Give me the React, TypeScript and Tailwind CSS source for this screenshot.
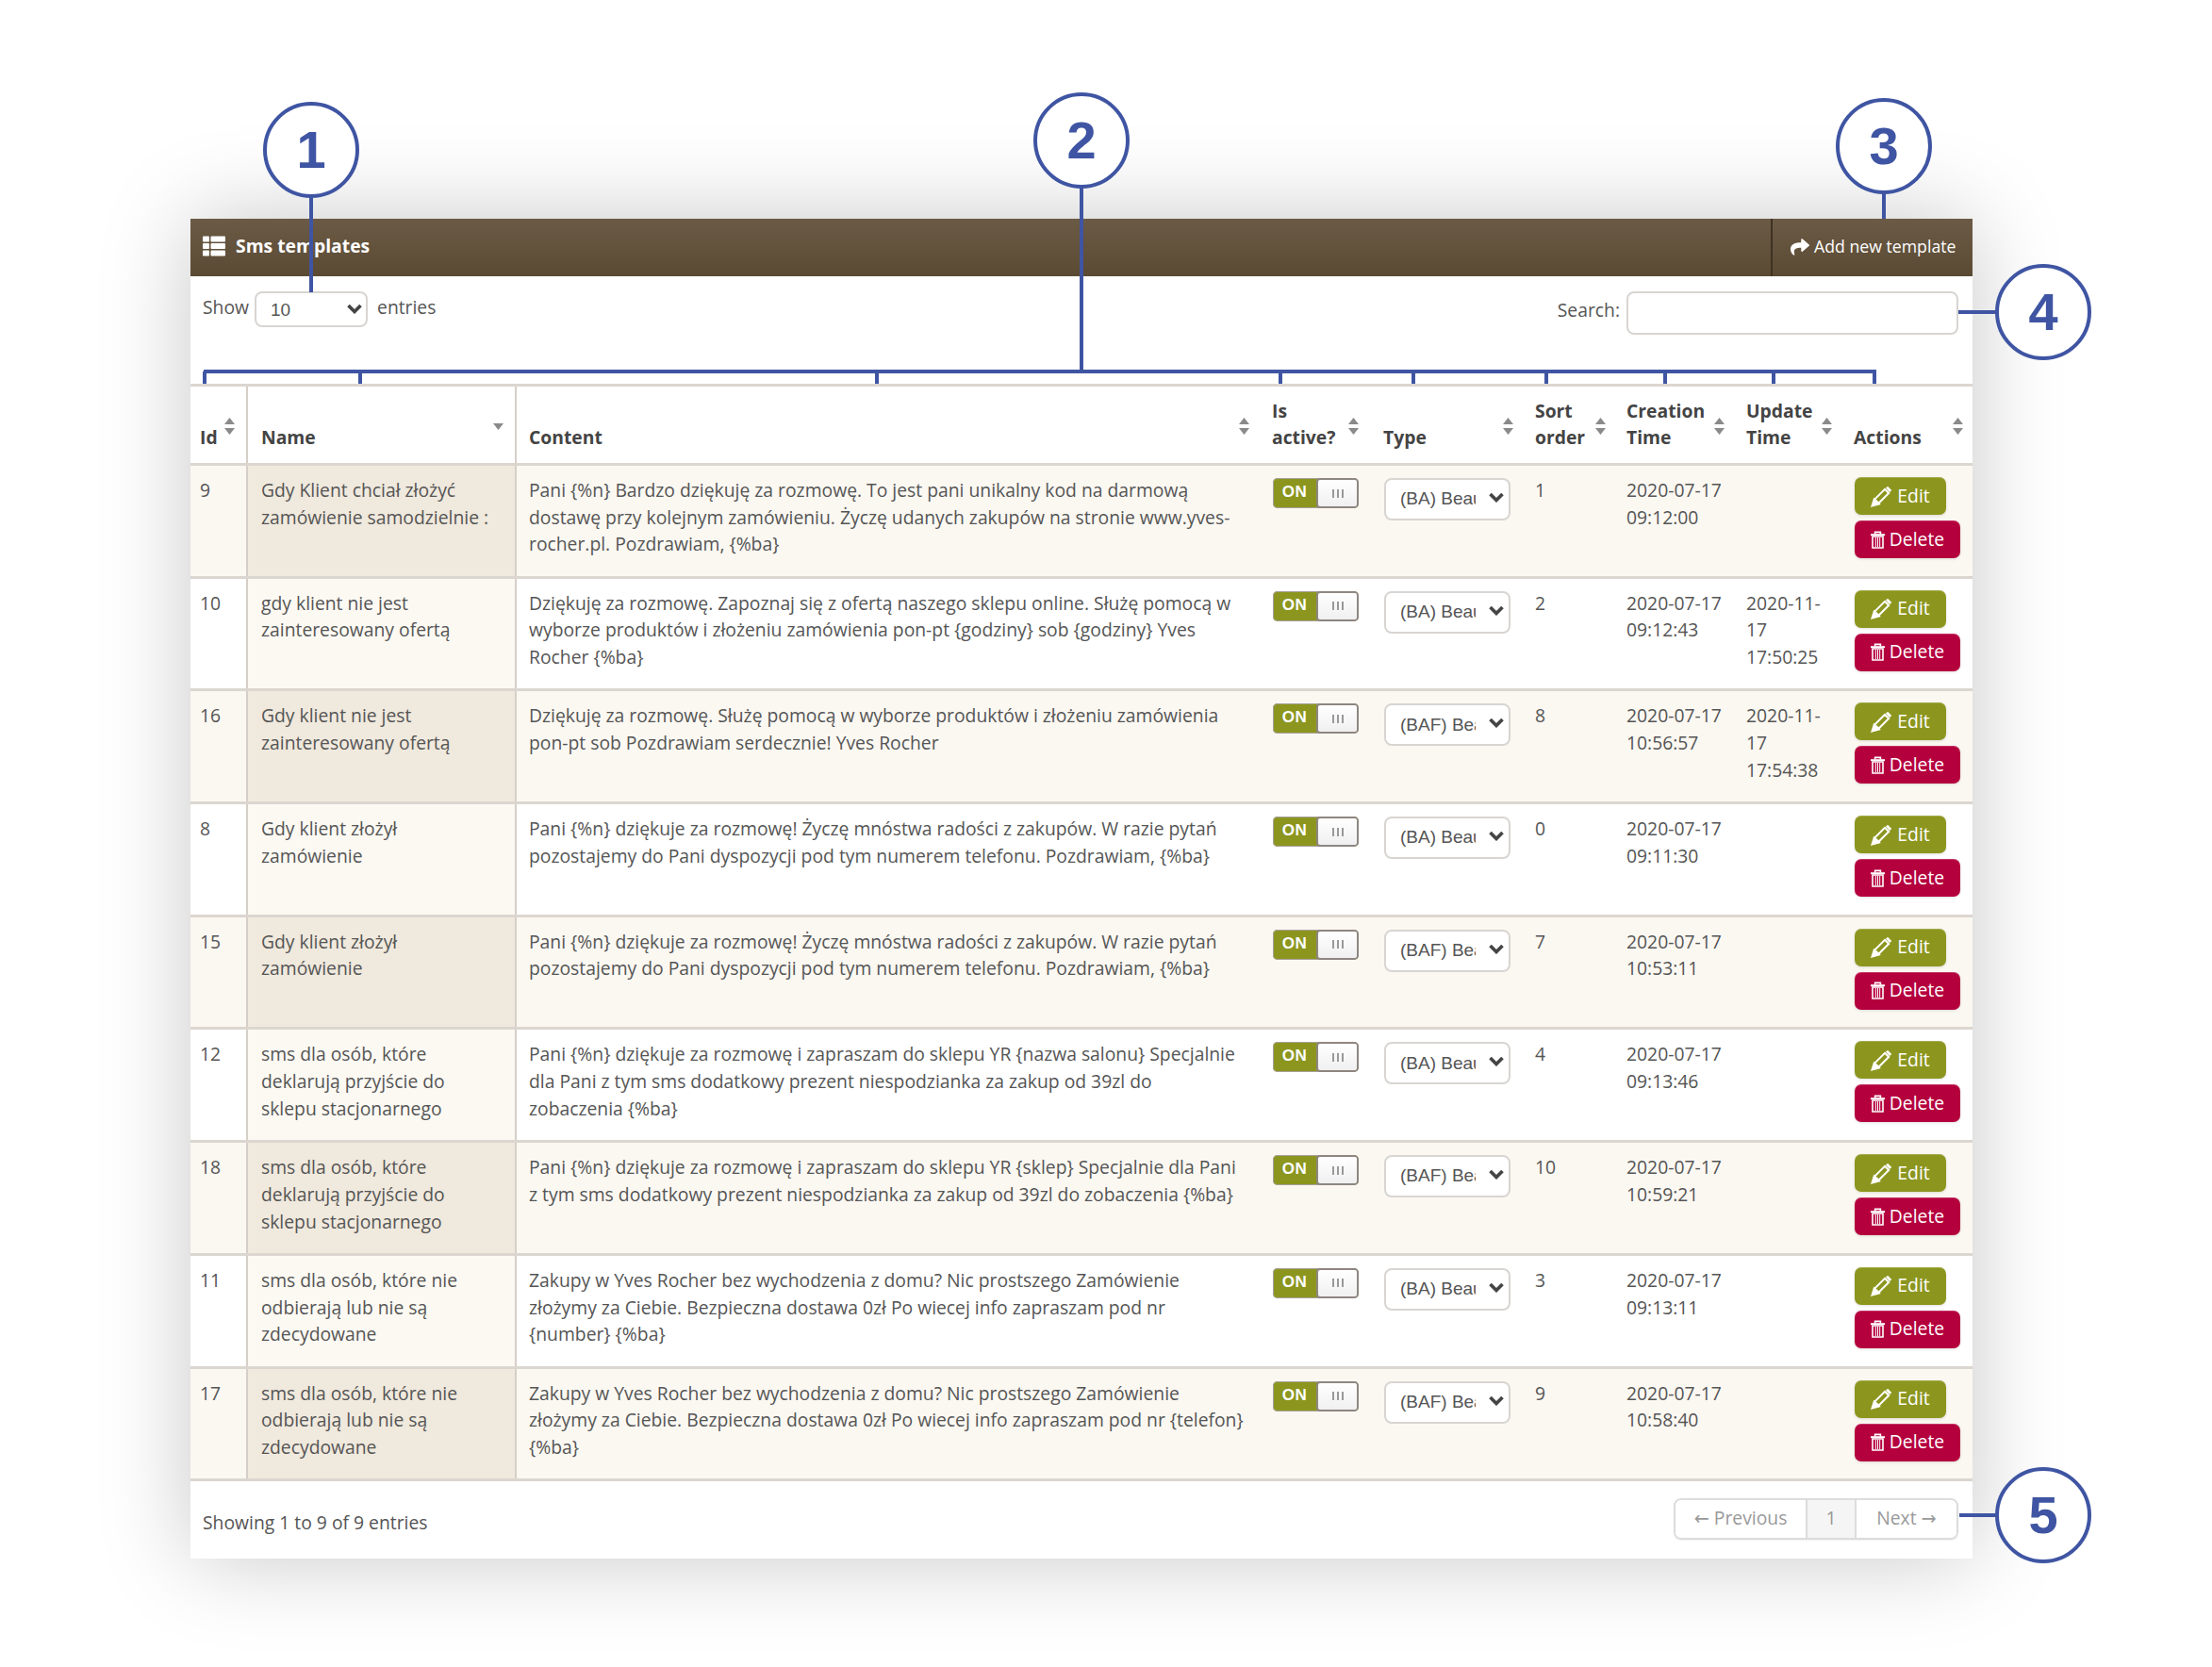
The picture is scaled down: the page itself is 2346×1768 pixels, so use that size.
import { FaThList, FaShare } from "react-icons/fa";

type Row = {
  id: number;
  name: string;
  content: string;
  type: string;
  sort: number;
  created: string;
  updated?: string;
};

const ROWS: Row[] = [
  {
    id: 9,
    name: "Gdy Klient chciał złożyć zamówienie samodzielnie :",
    content:
      "Pani {%n} Bardzo dziękuję za rozmowę. To jest pani unikalny kod na darmową dostawę przy kolejnym zamówieniu. Życzę udanych zakupów na stronie www.yves-rocher.pl. Pozdrawiam, {%ba}",
    type: "(BA) Beauty Advisor",
    sort: 1,
    created: "2020-07-17 09:12:00",
  },
  {
    id: 10,
    name: "gdy klient nie jest zainteresowany ofertą",
    content:
      "Dziękuję za rozmowę. Zapoznaj się z ofertą naszego sklepu online. Służę pomocą w wyborze produktów i złożeniu zamówienia pon-pt {godziny} sob {godziny} Yves Rocher {%ba}",
    type: "(BA) Beauty Advisor",
    sort: 2,
    created: "2020-07-17 09:12:43",
    updated: "2020-11-17 17:50:25",
  },
  {
    id: 16,
    name: "Gdy klient nie jest zainteresowany ofertą",
    content:
      "Dziękuję za rozmowę. Służę pomocą w wyborze produktów i złożeniu zamówienia pon-pt sob Pozdrawiam serdecznie! Yves Rocher",
    type: "(BAF) Beauty Advisor",
    sort: 8,
    created: "2020-07-17 10:56:57",
    updated: "2020-11-17 17:54:38",
  },
  {
    id: 8,
    name: "Gdy klient złożył zamówienie",
    content:
      "Pani {%n} dziękuje za rozmowę! Życzę mnóstwa radości z zakupów. W razie pytań pozostajemy do Pani dyspozycji pod tym numerem telefonu. Pozdrawiam, {%ba}",
    type: "(BA) Beauty Advisor",
    sort: 0,
    created: "2020-07-17 09:11:30",
  },
  {
    id: 15,
    name: "Gdy klient złożył zamówienie",
    content:
      "Pani {%n} dziękuje za rozmowę! Życzę mnóstwa radości z zakupów. W razie pytań pozostajemy do Pani dyspozycji pod tym numerem telefonu. Pozdrawiam, {%ba}",
    type: "(BAF) Beauty Advisor",
    sort: 7,
    created: "2020-07-17 10:53:11",
  },
  {
    id: 12,
    name: "sms dla osób, które deklarują przyjście do sklepu stacjonarnego",
    content:
      "Pani {%n} dziękuje za rozmowę i zapraszam do sklepu YR {nazwa salonu} Specjalnie dla Pani z tym sms dodatkowy prezent niespodzianka za zakup od 39zl do zobaczenia {%ba}",
    type: "(BA) Beauty Advisor",
    sort: 4,
    created: "2020-07-17 09:13:46",
  },
  {
    id: 18,
    name: "sms dla osób, które deklarują przyjście do sklepu stacjonarnego",
    content:
      "Pani {%n} dziękuje za rozmowę i zapraszam do sklepu YR {sklep} Specjalnie dla Pani z tym sms dodatkowy prezent niespodzianka za zakup od 39zl do zobaczenia {%ba}",
    type: "(BAF) Beauty Advisor",
    sort: 10,
    created: "2020-07-17 10:59:21",
  },
  {
    id: 11,
    name: "sms dla osób, które nie odbierają lub nie są zdecydowane",
    content:
      "Zakupy w Yves Rocher bez wychodzenia z domu? Nic prostszego Zamówienie złożymy za Ciebie. Bezpieczna dostawa 0zł Po wiecej info zapraszam pod nr {number} {%ba}",
    type: "(BA) Beauty Advisor",
    sort: 3,
    created: "2020-07-17 09:13:11",
  },
  {
    id: 17,
    name: "sms dla osób, które nie odbierają lub nie są zdecydowane",
    content:
      "Zakupy w Yves Rocher bez wychodzenia z domu? Nic prostszego Zamówienie złożymy za Ciebie. Bezpieczna dostawa 0zł Po wiecej info zapraszam pod nr {telefon} {%ba}",
    type: "(BAF) Beauty Advisor",
    sort: 9,
    created: "2020-07-17 10:58:40",
  },
];

function SortArrows({ only, className }: { only?: boolean; className: string }) {
  return (
    <svg width="11" height="18" viewBox="0 0 11 18" className={`absolute ${className}`}>
      {!only && <path d="M5.5 0l5.5 7H0z" fill="#8a8a8a" />}
      <path d="M0 11h11l-5.5 7z" fill="#8a8a8a" />
    </svg>
  );
}

function Chevron({ className }: { className: string }) {
  return (
    <svg width="16" height="11" viewBox="0 0 16 11" className={`absolute pointer-events-none ${className}`}>
      <path d="M1.5 2l6.5 6.5L14.5 2" fill="none" stroke="#444" strokeWidth="3.6" />
    </svg>
  );
}

function PencilIcon() {
  return (
    <svg width="23" height="23" viewBox="0 0 23 23" fill="none" stroke="#fff" strokeWidth="2">
      <path d="M4.2 14.6L15 3.8l4.2 4.2L8.4 18.8z" />
      <path d="M1.5 21.5l2.2-7 5.2 5z" fill="#fff" />
      <path d="M17 1.8l4.2 4.2" strokeWidth="3" />
    </svg>
  );
}

function TrashIcon() {
  return (
    <svg width="15" height="19" viewBox="0 0 15 19" fill="none" stroke="#fff">
      <path d="M0 4.2h15" strokeWidth="2" />
      <path d="M4.6 3.6V1.4h5.8v2.2" strokeWidth="1.6" />
      <path d="M2 6h11v12H2z" strokeWidth="1.6" />
      <path d="M5.3 7v10M7.5 7v10M9.7 7v10" strokeWidth="1" />
    </svg>
  );
}

function Toggle() {
  return (
    <div className="flex w-[91px] h-[32px] rounded-[5px] bg-[#8c961f] shadow-[0_0_0_1px_#a8a09a_inset] overflow-hidden">
      <span className="w-[46px] text-center leading-[30px] text-white font-bold text-[17px] tracking-[0.5px] font-['Liberation_Sans',sans-serif]">
        ON
      </span>
      <span className="flex-1 flex items-center justify-center gap-[3px] rounded-[4px] border-2 border-[#8f8681] bg-gradient-to-b from-white to-[#f0f0f0]">
        <i className="block w-[2px] h-[9px] bg-[#999]" />
        <i className="block w-[2px] h-[9px] bg-[#999]" />
        <i className="block w-[2px] h-[9px] bg-[#999]" />
      </span>
    </div>
  );
}

function TypeSelect({ value }: { value: string }) {
  return (
    <div className="relative w-[134px] h-[45px]">
      <select
        defaultValue={value}
        className="appearance-none w-full h-full bg-white rounded-[8px] border-2 border-[#d8d5d2] pl-[15px] pr-[35px] text-[19px] text-[#555] font-['Liberation_Sans',sans-serif] outline-none"
      >
        <option>{value}</option>
      </select>
      <Chevron className="right-[7px] top-[15px]" />
    </div>
  );
}

const THS = "relative align-bottom text-left font-bold text-[#444] pl-[14px] pr-[4px] pb-[12px]";
const TDS = "align-top pl-[14px] pr-[6px] pt-[12px]";

function TemplatesTable() {
  return (
    <table className="w-[1890px] table-fixed border-collapse">
      <colgroup>
        <col className="w-[60px]" />
        <col className="w-[285px]" />
        <col className="w-[788px]" />
        <col className="w-[118px]" />
        <col className="w-[161px]" />
        <col className="w-[97px]" />
        <col className="w-[127px]" />
        <col className="w-[114px]" />
        <col className="w-[140px]" />
      </colgroup>
      <thead>
        <tr className="h-[84px] border-t-[3px] border-b-[3px] border-[#dcd6d0]">
          <th className={`${THS} !pl-[10px] border-r-2 border-[#d6cfc8]`}>
            Id
            <SortArrows className="right-[12px] top-[33px]" />
          </th>
          <th className={`${THS} border-r-2 border-[#d6cfc8]`}>
            Name
            <SortArrows only className="right-[12px] top-[28px]" />
          </th>
          <th className={`${THS} !pl-[13px]`}>
            Content
            <SortArrows className="right-[10px] top-[33px]" />
          </th>
          <th className={`${THS} !pr-[30px]`}>
            Is active?
            <SortArrows className="right-[12px] top-[33px]" />
          </th>
          <th className={THS}>
            Type
            <SortArrows className="right-[9px] top-[33px]" />
          </th>
          <th className={THS}>
            Sort order
            <SortArrows className="right-[8px] top-[33px]" />
          </th>
          <th className={THS}>
            Creation Time
            <SortArrows className="right-[9px] top-[33px]" />
          </th>
          <th className={THS}>
            Update Time
            <SortArrows className="right-[9px] top-[33px]" />
          </th>
          <th className={THS}>
            Actions
            <SortArrows className="right-[10px] top-[33px]" />
          </th>
        </tr>
      </thead>
      <tbody>
        {ROWS.map((r, i) => (
          <tr
            key={r.id}
            className={`h-[119.7px] border-b-[3px] border-[#dcd6d0] ${i % 2 === 0 ? "bg-[#fbf8f2]" : "bg-white"}`}
          >
            <td className={`${TDS} !pl-[10px] border-r-2 border-[#d6cfc8]`}>{r.id}</td>
            <td
              className={`${TDS} !pr-[24px] border-r-2 border-[#d6cfc8] ${i % 2 === 0 ? "bg-[#f0e9dd]" : "bg-[#fcf9f3]"}`}
            >
              {r.name}
            </td>
            <td className={`${TDS} !pl-[13px] !pr-[14px]`}>{r.content}</td>
            <td className="align-top pl-[15px] pt-[13px]">
              <Toggle />
            </td>
            <td className="align-top pl-[15px] pt-[13px]">
              <TypeSelect value={r.type} />
            </td>
            <td className={TDS}>{r.sort}</td>
            <td className={TDS}>{r.created}</td>
            <td className={TDS}>{r.updated}</td>
            <td className="align-top pl-[15px] pt-[12px]">
              <div className="flex flex-col items-start gap-[6px]">
                <button className="flex items-center justify-center gap-[5px] w-[97px] h-[40px] rounded-[7px] bg-[#8c961f] text-white shadow-[inset_0_1px_0_rgba(255,255,255,0.2),0_1px_3px_rgba(0,0,0,0.12)]">
                  <PencilIcon />
                  Edit
                </button>
                <button className="flex items-center justify-center gap-[5px] w-[112px] h-[40px] rounded-[7px] bg-[#b5003e] text-white shadow-[inset_0_1px_0_rgba(255,255,255,0.2),0_1px_3px_rgba(0,0,0,0.12)]">
                  <TrashIcon />
                  Delete
                </button>
              </div>
            </td>
          </tr>
        ))}
      </tbody>
    </table>
  );
}

const CALLOUT = "#3f55a3";

// numbered circles and connector lines drawn over the screenshot
function Callouts() {
  const circles = [
    { n: "1", x: 330, y: 159 },
    { n: "2", x: 1147, y: 149 },
    { n: "3", x: 1998, y: 155 },
    { n: "4", x: 2167, y: 331 },
    { n: "5", x: 2167, y: 1607 },
  ];
  const ticks = [217, 382, 930, 1358, 1499, 1640, 1766, 1881, 1988];
  return (
    <svg width="2346" height="1768" className="absolute left-0 top-0 pointer-events-none">
      <g stroke={CALLOUT} strokeWidth="4" fill="none">
        <path d="M330 209V310M1147 199V394M1998 205V232M2077 331H2117M2078 1607H2117" />
        <path d="M216 394H1990" />
        {ticks.map((x) => (
          <path key={x} d={`M${x} 394V407`} />
        ))}
      </g>
      {circles.map((c) => (
        <g key={c.n}>
          <circle cx={c.x} cy={c.y} r="49" fill="#fff" stroke={CALLOUT} strokeWidth="4" />
          <text
            x={c.x}
            y={c.y + 19}
            textAnchor="middle"
            fill={CALLOUT}
            fontSize="56"
            fontWeight="700"
            fontFamily="Liberation Sans, sans-serif"
          >
            {c.n}
          </text>
        </g>
      ))}
    </svg>
  );
}

export default function App() {
  return (
    <div className="relative w-[2346px] h-[1768px] bg-white overflow-hidden pl-[202px] pt-[232px] font-['Open_Sans',sans-serif] text-[19.32px] leading-[28.7px] text-[#555]">
      <div className="w-[1890px] h-[1421px] bg-white shadow-[0_0_90px_rgba(0,0,0,0.22)]">
        {/* header bar */}
        <div className="flex h-[61px] bg-gradient-to-b from-[#6b5a45] to-[#5b4a33] text-white">
          <div className="flex flex-1 items-center gap-[11px] pl-[13px] pb-[3px] font-bold">
            <FaThList className="text-[24px]" />
            Sms templates
          </div>
          <div className="flex items-center gap-[5px] w-[214px] pl-[19px] pb-[2px] border-l-2 border-[#3f3222] text-[17.7px]">
            <FaShare className="text-[20px]" />
            Add new template
          </div>
        </div>

        {/* length + search */}
        <div className="flex justify-between h-[114px] pt-[16px] pl-[13px] pr-[15px]">
          <div className="flex items-start gap-[6px]">
            <span className="mt-[3px]">Show</span>
            <div className="relative w-[120px] h-[38px]">
              <select
                defaultValue="10"
                className="appearance-none w-full h-full bg-white rounded-[8px] border-2 border-[#d8d5d2] pl-[15px] pt-[2px] text-[19px] text-[#555] font-['Liberation_Sans',sans-serif] outline-none"
              >
                <option>10</option>
              </select>
              <Chevron className="right-[6px] top-[13px]" />
            </div>
            <span className="mt-[3px] ml-[4px]">entries</span>
          </div>
          <label className="flex items-start gap-[7px]">
            <span className="mt-[6px]">Search:</span>
            <input className="w-[352px] h-[46px] rounded-[8px] border-2 border-[#d8d5d2] bg-white outline-none" />
          </label>
        </div>

        <TemplatesTable />

        {/* footer */}
        <div className="flex justify-between pl-[13px] pr-[15px] pt-[18px]">
          <div className="pt-[12px]">Showing 1 to 9 of 9 entries</div>
          <div className="flex h-[44px] rounded-[8px] border-2 border-[#dcdcdc] text-[#999] leading-[38px] shadow-[0_1px_2px_rgba(0,0,0,0.06)] overflow-hidden">
            <span className="w-[138px] text-center bg-white">
              <span className="font-['DejaVu_Sans',sans-serif]">←</span> Previous
            </span>
            <span className="w-[54px] text-center border-x-2 border-[#dcdcdc] bg-[#f5f5f5]">1</span>
            <span className="w-[106px] text-center bg-white">
              Next <span className="font-['DejaVu_Sans',sans-serif]">→</span>
            </span>
          </div>
        </div>
      </div>
      <Callouts />
    </div>
  );
}
